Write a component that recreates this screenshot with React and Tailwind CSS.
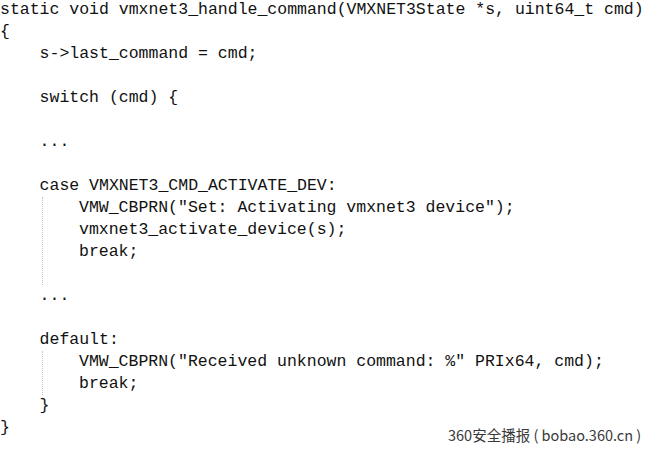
import React from 'react';

const mono = { fontFamily: '"Liberation Mono", "Courier New", monospace' };

const Line = ({ children }) => (
  <div className="h-[22px] leading-[22px] whitespace-pre">{children || ' '}</div>
);

const Guide = ({ lines }) => (
  <div className="ml-[42px] border-l border-dotted border-[#c4c4c4]">
    {lines.map((l, i) => (
      <div key={i} className="h-[22px] leading-[22px] whitespace-pre pl-[36px]">
        {l || ' '}
      </div>
    ))}
  </div>
);

export default function App() {
  return (
    <div className="relative w-[656px] h-[454px] bg-white overflow-hidden">
      <div className="mt-[-1px] text-[16.5px] text-[#111]" style={mono}>
        <Line>static void vmxnet3_handle_command(VMXNET3State *s, uint64_t cmd)</Line>
        <Line>{'{'}</Line>
        <Line>{'    s->last_command = cmd;'}</Line>
        <Line />
        <Line>{'    switch (cmd) {'}</Line>
        <Line />
        <Line>{'    ...'}</Line>
        <Line />
        <Line>{'    case VMXNET3_CMD_ACTIVATE_DEV:'}</Line>
        <Guide
          lines={[
            'VMW_CBPRN("Set: Activating vmxnet3 device");',
            'vmxnet3_activate_device(s);',
            'break;',
            '',
          ]}
        />
        <Line>{'    ...'}</Line>
        <Line />
        <Line>{'    default:'}</Line>
        <Guide
          lines={[
            'VMW_CBPRN("Received unknown command: %" PRIx64, cmd);',
            'break;',
          ]}
        />
        <Line>{'    }'}</Line>
        <Line>{'}'}</Line>
      </div>
      <div
        className="absolute left-[448px] top-[425px] text-[14.5px] leading-[20px] text-[#3a3a3a] whitespace-pre [text-shadow:0_0_2px_#fff]"
        style={{ fontFamily: '"Noto Sans CJK SC", "Noto Sans", sans-serif' }}
      >
        360安全播报 ( bobao.360.cn )
      </div>
    </div>
  );
}
